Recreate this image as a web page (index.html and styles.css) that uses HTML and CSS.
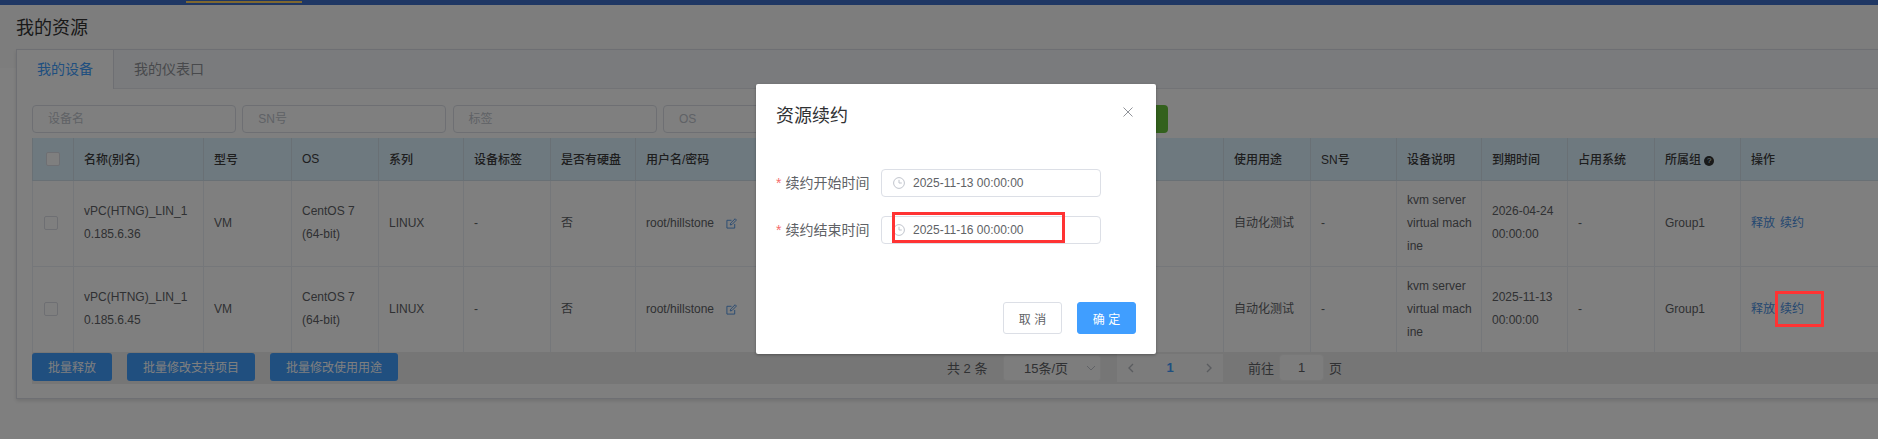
FILE: index.html
```html
<!DOCTYPE html>
<html lang="zh-CN">
<head>
<meta charset="utf-8">
<title>我的资源</title>
<link rel="stylesheet" href="styles.css">
</head>
<body>
<div class="topbar"><span class="nav-active"></span></div>
<main class="page">
  <h1 class="page-title">我的资源</h1>
  <section class="card">
    <div class="tabs">
      <div class="tab tab-active">我的设备</div>
      <div class="tab">我的仪表口</div>
    </div>
    <div class="card-body">
      <div class="filters">
        <div class="filter">设备名</div>
        <div class="filter">SN号</div>
        <div class="filter">标签</div>
        <div class="filter">OS</div>
        <div class="search-btn"></div>
      </div>
      <table class="grid">
        <colgroup>
          <col class="c41"><col class="c130"><col class="c88"><col class="c87"><col class="c85"><col class="c87"><col class="c85"><col class="c588"><col class="c87"><col class="c86"><col class="c85"><col class="c86"><col class="c87"><col class="c86"><col class="c140">
        </colgroup>
        <thead>
          <tr>
            <th class="check-head"><span class="check"></span></th>
            <th>名称(别名)</th><th>型号</th><th>OS</th><th>系列</th><th>设备标签</th><th>是否有硬盘</th><th>用户名/密码</th>
            <th>使用用途</th><th>SN号</th><th>设备说明</th><th>到期时间</th><th>占用系统</th>
            <th>所属组 <span class="help">?</span></th><th>操作</th>
          </tr>
        </thead>
        <tbody>
          <tr>
            <td class="check-cell"><span class="check"></span></td>
            <td>vPC(HTNG)_LIN_10.185.6.36</td><td>VM</td><td>CentOS 7 (64-bit)</td><td>LINUX</td><td>-</td><td>否</td>
            <td>root/hillstone<svg class="edit" viewBox="0 0 12 12"><path d="M9.5 6.5V11H1V2.5h5M4.6 7.6l.5-2L10 .8l1.4 1.4-4.8 4.9z"/></svg></td>
            <td>自动化测试</td><td>-</td><td class="desc">kvm server virtual machine</td><td>2026-04-24 00:00:00</td><td>-</td><td>Group1</td>
            <td><a class="link">释放</a><a class="link">续约</a></td>
          </tr>
          <tr>
            <td class="check-cell"><span class="check"></span></td>
            <td>vPC(HTNG)_LIN_10.185.6.45</td><td>VM</td><td>CentOS 7 (64-bit)</td><td>LINUX</td><td>-</td><td>否</td>
            <td>root/hillstone<svg class="edit" viewBox="0 0 12 12"><path d="M9.5 6.5V11H1V2.5h5M4.6 7.6l.5-2L10 .8l1.4 1.4-4.8 4.9z"/></svg></td>
            <td>自动化测试</td><td>-</td><td class="desc">kvm server virtual machine</td><td>2025-11-13 00:00:00</td><td>-</td><td>Group1</td>
            <td><a class="link">释放</a><a class="link">续约</a></td>
          </tr>
        </tbody>
      </table>
      <div class="foot">
        <div class="bulk">
          <button class="btn-bulk">批量释放</button>
          <button class="btn-bulk">批量修改支持项目</button>
          <button class="btn-bulk">批量修改使用用途</button>
        </div>
        <div class="pager">
          <span class="total">共 2 条</span>
          <div class="size">15条/页<svg class="size-arrow" viewBox="0 0 10 6"><path d="M1 1l4 4 4-4"/></svg></div>
          <div class="pages">
            <svg class="chev" viewBox="0 0 6 10"><path d="M5 1L1 5l4 4"/></svg>
            <span class="page-no">1</span>
            <svg class="chev" viewBox="0 0 6 10"><path d="M1 1l4 4-4 4"/></svg>
          </div>
          <span class="goto">前往</span>
          <div class="jump">1</div>
          <span class="goto-end">页</span>
        </div>
      </div>
    </div>
  </section>
</main>

<div class="overlay"></div>
<div class="dialog">
  <div class="dialog-head">
    <div class="dialog-title">资源续约</div>
    <svg class="close" viewBox="0 0 10 10"><path d="M.5.5l9 9M9.5.5l-9 9"/></svg>
  </div>
  <div class="form">
    <div class="form-row">
      <label class="form-label"><span class="star">*</span>续约开始时间</label>
      <div class="date">
        <svg class="clock" viewBox="0 0 12 12"><circle cx="6" cy="6" r="5.4"/><path d="M6 2.8V6h2.8"/></svg>
        <span>2025-11-13 00:00:00</span>
      </div>
    </div>
    <div class="form-row">
      <label class="form-label"><span class="star">*</span>续约结束时间</label>
      <div class="date">
        <svg class="clock" viewBox="0 0 12 12"><circle cx="6" cy="6" r="5.4"/><path d="M6 2.8V6h2.8"/></svg>
        <span>2025-11-16 00:00:00</span>
      </div>
    </div>
  </div>
  <div class="dialog-foot">
    <button class="btn btn-plain">取 消</button>
    <button class="btn btn-primary">确 定</button>
  </div>
</div>
<div class="mark mark-date"></div>
<div class="mark mark-renew"></div>
</body>
</html>
```

FILE: styles.css
```css
* { box-sizing: border-box; }
html, body { margin: 0; height: 100%; overflow: hidden; }
body {
  width: 1878px;
  height: 439px;
  position: relative;
  font-family: "Liberation Sans", "Noto Sans CJK SC", sans-serif;
  font-size: 12px;
  color: #606266;
  background: #fff;
}
.topbar { height: 5px; background: #3f6fc8; padding-top: 1px; }
.nav-active { display: block; width: 116px; height: 2px; margin-left: 186px; background: #ffd060; }
.page {
  height: 434px;
  padding: 0 0 0 16px;
  background: linear-gradient(#fbfbfb 63px, #fff 63px);
}
.page-title { margin: 0; height: 44px; font-size: 18px; font-weight: 400; line-height: 46px; color: #333; }
.card {
  width: 1900px;
  height: 350px;
  background: #fff;
  border: 1px solid #dcdfe6;
  box-shadow: 0 2px 4px rgba(0, 0, 0, .12);
}
.tabs { display: flex; height: 39px; background: #f5f7fa; border-bottom: 1px solid #e4e7ed; }
.tab { padding: 0 20px; line-height: 38px; font-size: 14px; color: #909399; }
.tab-active {
  width: 97px;
  height: 39px;
  color: #409eff;
  background: #fff;
  border-right: 1px solid #dcdfe6;
}
.card-body { padding: 16px 15px; }
.filters { display: flex; gap: 6.3px; height: 28px; width: 1136px; margin-bottom: 5px; }
.filter {
  width: 204px;
  height: 28px;
  padding-left: 15px;
  line-height: 26px;
  color: #c0c4cc;
  border: 1px solid #dcdfe6;
  border-radius: 4px;
  background: #fff;
}
.search-btn { width: 80px; height: 28px; margin-left: auto; background: #67c23a; border-radius: 4px; }
.grid { table-layout: fixed; width: 1848px; border-collapse: collapse; font-size: 12px; }
.c41 { width: 41px; } .c130 { width: 130px; } .c88 { width: 88px; } .c87 { width: 87px; }
.c85 { width: 85px; } .c588 { width: 588px; } .c86 { width: 86px; } .c140 { width: 140px; }
.grid th {
  height: 42px;
  padding: 0 10px;
  text-align: left;
  font-weight: 500;
  color: #3c3c3c;
  background: #dcf2ff;
  border: 1px solid #d3e0ea;
  border-top: 0;
  white-space: nowrap;
}
.grid td {
  height: 86px;
  padding: 8px 10px;
  line-height: 23px;
  word-break: break-all;
  border: 1px solid #ebeef5;
}
.grid tbody tr:last-child td { height: 85px; border-bottom: 0; }
.grid .desc { padding-right: 8px; }
.grid .check-head, .grid .check-cell { padding: 0; text-align: left; }
.check { display: block; width: 14px; height: 14px; border: 1px solid #dcdfe6; border-radius: 2px; background: #fff; }
.check-head .check { margin-left: 13px; }
.check-cell .check { margin-left: 11px; }
.help {
  display: inline-block;
  width: 10px;
  height: 10px;
  border-radius: 50%;
  background: #333;
  color: #dcf2ff;
  font-size: 8px;
  line-height: 10px;
  text-align: center;
  vertical-align: 1px;
}
.edit { display: inline-block; width: 11px; height: 11px; margin-left: 12px; vertical-align: -2px; }
.edit path { fill: none; stroke: #4a90e2; stroke-width: 1; }
.link { margin-right: 5px; color: #4a90e2; }
.foot { display: flex; align-items: flex-start; height: 32px; background: #ededed; }
.bulk { display: flex; gap: 15px; padding-top: 1px; width: 915px; }
.btn-bulk {
  height: 28px;
  padding: 0 16px;
  border: 0;
  border-radius: 3px;
  font: inherit;
  color: #fff;
  background: #409eff;
}
.pager { display: flex; align-items: center; height: 32px; font-size: 13px; }
.total { width: 56px; }
.size {
  display: flex;
  align-items: center;
  width: 98px;
  height: 26px;
  padding-left: 20px;
  background: #fafafa;
  border: 1px solid #f0f0f0;
  border-radius: 3px;
}
.size-arrow { width: 10px; height: 6px; margin-left: 18px; }
.size-arrow path { fill: none; stroke: #c0c4cc; stroke-width: 1; }
.pages {
  display: flex;
  align-items: center;
  justify-content: space-between;
  width: 106px;
  height: 28px;
  margin-left: 16px;
  padding: 0 11px;
  background: #f9f9f9;
}
.chev { width: 6px; height: 10px; }
.chev path { fill: none; stroke: #b5b8bf; stroke-width: 1.4; }
.page-no { font-weight: 700; color: #409eff; }
.goto { margin-left: 25px; }
.jump {
  width: 45px;
  height: 27px;
  margin-left: 5px;
  line-height: 25px;
  text-align: center;
  background: #fafafa;
  border: 1px solid #f0f0f0;
  border-radius: 4px;
}
.goto-end { margin-left: 5px; }
.overlay { position: absolute; inset: 0; background: rgba(0, 0, 0, .5); }
.dialog {
  position: absolute;
  left: 756px;
  top: 84px;
  width: 400px;
  height: 270px;
  display: flex;
  flex-direction: column;
  padding: 20px;
  background: #fff;
  border-radius: 2px;
  box-shadow: 0 1px 3px rgba(0, 0, 0, .3);
}
.dialog-head { display: flex; justify-content: space-between; margin-right: 3px; height: 24px; }
.dialog-title { font-size: 18px; line-height: 24px; color: #303133; }
.close { width: 10px; height: 10px; margin-top: 3px; }
.close path { fill: none; stroke: #909399; stroke-width: 1; }
.form { margin-top: 41px; display: flex; flex-direction: column; gap: 19px; }
.form-row { display: flex; align-items: center; gap: 11px; height: 28px; }
.form-label { width: 94px; padding-bottom: 3px; font-size: 14px; color: #606266; white-space: nowrap; }
.star { margin-right: 4px; color: #f56c6c; font-size: 14px; }
.date {
  display: flex;
  align-items: center;
  gap: 8px;
  width: 220px;
  height: 28px;
  padding-left: 11px;
  color: #606266;
  border: 1px solid #dcdfe6;
  border-radius: 4px;
}
.clock { width: 12px; height: 12px; flex: none; }
.clock circle, .clock path { fill: none; stroke: #c0c4cc; stroke-width: 1; }
.dialog-foot { margin-top: auto; display: flex; justify-content: flex-end; gap: 15px; }
.btn { width: 59px; height: 32px; border-radius: 3px; font: inherit; }
.btn-plain { background: #fff; color: #606266; border: 1px solid #dcdfe6; }
.btn-primary { background: #409eff; color: #fff; border: 1px solid #409eff; }
.mark { position: absolute; border: 3px solid #ff3333; }
.mark-date { left: 892px; top: 212px; width: 173px; height: 31px; }
.mark-renew { left: 1775px; top: 291px; width: 49px; height: 36px; }
```
